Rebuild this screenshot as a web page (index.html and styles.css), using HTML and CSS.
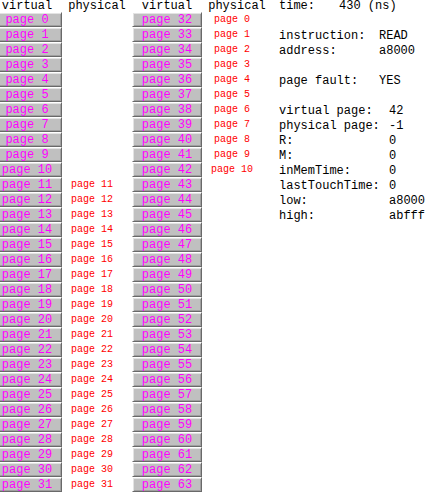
FILE: index.html
```
<!DOCTYPE html>
<html lang="en">
<head>
<meta charset="utf-8">
<title>Memory pages</title>
<link rel="stylesheet" href="styles.css">
</head>
<body>
<main class="simulator">
  <section class="memory" id="memory" aria-label="Pages"></section>
  <section class="details" aria-label="Details">
    <dl class="group group-time"><dt>time:</dt><dd>430 (ns)</dd></dl>
    <dl class="group group-step">
      <dt>instruction:</dt><dd>READ</dd>
      <dt>address:</dt><dd>a8000</dd>
    </dl>
    <dl class="group group-step"><dt>page fault:</dt><dd>YES</dd></dl>
    <dl class="group group-page">
      <dt>virtual page:</dt><dd>42</dd>
      <dt>physical page:</dt><dd>-1</dd>
      <dt>R:</dt><dd>0</dd>
      <dt>M:</dt><dd>0</dd>
      <dt>inMemTime:</dt><dd>0</dd>
      <dt>lastTouchTime:</dt><dd>0</dd>
      <dt>low:</dt><dd>a8000</dd>
      <dt>high:</dt><dd>abfff</dd>
    </dl>
  </section>
</main>
<script src="pages.js"></script>
</body>
</html>
```
FILE: pages.js
```
// Virtual page number -> physical page number
const mapping = new Map();
for (let n = 11; n <= 31; n++) mapping.set(n, n);
for (let n = 0; n <= 10; n++) mapping.set(32 + n, n);

function add(parent, tag, className, text) {
  const el = document.createElement(tag);
  el.className = className;
  el.textContent = text;
  parent.append(el);
  return el;
}

const memory = document.getElementById("memory");
for (const first of [0, 32]) {
  const bank = add(memory, "div", "bank", "");
  add(bank, "span", "heading", "virtual");
  add(bank, "span", "heading", "physical");
  for (let n = first; n < first + 32; n++) {
    add(bank, "button", "virtual", "page " + n).type = "button";
    add(bank, "span", "physical", mapping.has(n) ? "page " + mapping.get(n) : "");
  }
}
```
FILE: styles.css
```
* {
  box-sizing: border-box;
}

body {
  margin: 0;
  overflow: hidden;
  background: #fff;
  color: #000;
  font: 12px/15px "Liberation Mono", monospace;
}

.simulator {
  display: flex;
  align-items: flex-start;
}

.memory {
  display: flex;
  flex: none;
  margin-left: -8px;
}

.bank {
  display: grid;
  grid-template-columns: 70px 70px;
  grid-template-rows: 12px;
  grid-auto-rows: 15px;
}

.heading {
  line-height: 12px;
  text-align: center;
}

.virtual {
  padding: 2px 0 0;
  border: 1px solid;
  border-color: #fff #696969 #696969 #fff;
  background: #c0c0c0;
  box-shadow: inset 1px 1px #e3e3e3, inset -1px -1px #a0a0a0;
  color: #f0f;
  font: inherit;
  line-height: 11px;
  text-align: center;
}

.physical {
  padding-right: 10px;
  color: #f00;
  font-size: 10px;
  text-align: center;
}

.details {
  flex: 1;
  padding-left: 7px;
  line-height: 15px;
  white-space: nowrap;
}

.group {
  display: grid;
  margin: 0 0 15px;
}

.group-time {
  grid-template-columns: 60px 1fr;
  line-height: 12px;
  margin-bottom: 17px;
}

.group-step {
  grid-template-columns: 100px 1fr;
}

.group-page {
  grid-template-columns: 110px 1fr;
}

dt,
dd {
  margin: 0;
}
```
